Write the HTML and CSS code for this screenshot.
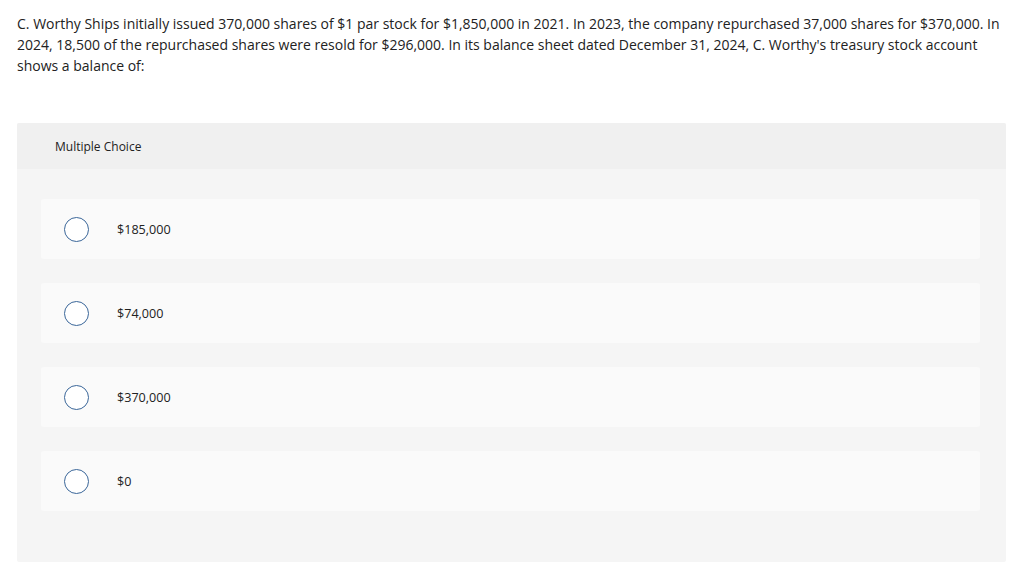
FILE: index.html
```html
<!DOCTYPE html>
<html>
<head>
<meta charset="utf-8">
<link rel="stylesheet" href="styles.css">
</head>
<body>
<div class="page">
  <p class="question">C. Worthy Ships initially issued 370,000 shares of $1 par stock for $1,850,000 in 2021. In 2023, the company repurchased 37,000 shares for $370,000. In 2024, 18,500 of the repurchased shares were resold for $296,000. In its balance sheet dated December 31, 2024, C. Worthy's treasury stock account shows a balance of:</p>
  <section class="panel">
    <header class="panel-head">Multiple Choice</header>
    <div class="panel-body">
      <div class="option"><span class="radio"></span><span class="label">$185,000</span></div>
      <div class="option"><span class="radio"></span><span class="label">$74,000</span></div>
      <div class="option"><span class="radio"></span><span class="label">$370,000</span></div>
      <div class="option"><span class="radio"></span><span class="label">$0</span></div>
    </div>
  </section>
</div>
</body>
</html>
```
FILE: styles.css
```css
html, body {
  margin: 0;
  padding: 0;
  background: #ffffff;
}
body {
  font-family: "Open Sans", "Liberation Sans", sans-serif;
  color: #222222;
}
.page {
  padding: 13px 18px 0 17px;
}
.question {
  margin: 0;
  font-size: 14px;
  line-height: 21px;
  color: #222222;
}
.panel {
  margin-top: 47px;
  background: #f5f5f5;
  border-radius: 2px;
  overflow: hidden;
}
.panel-head {
  background: #f0f0f0;
  height: 46px;
  display: flex;
  align-items: center;
  padding-left: 38px;
  font-size: 12px;
  color: #222222;
}
.panel-body {
  padding: 30px 26px 51px 24px;
  display: flex;
  flex-direction: column;
  gap: 24px;
}
.option {
  height: 60px;
  background: #fafafa;
  border-radius: 3px;
  display: flex;
  align-items: center;
  padding-left: 23px;
}
.radio {
  width: 23px;
  height: 23px;
  border: 1.5px solid #3a6699;
  border-radius: 50%;
  background: #ffffff;
  flex: none;
}
.label {
  margin-left: 28px;
  font-size: 12.6px;
  color: #222222;
}
```
